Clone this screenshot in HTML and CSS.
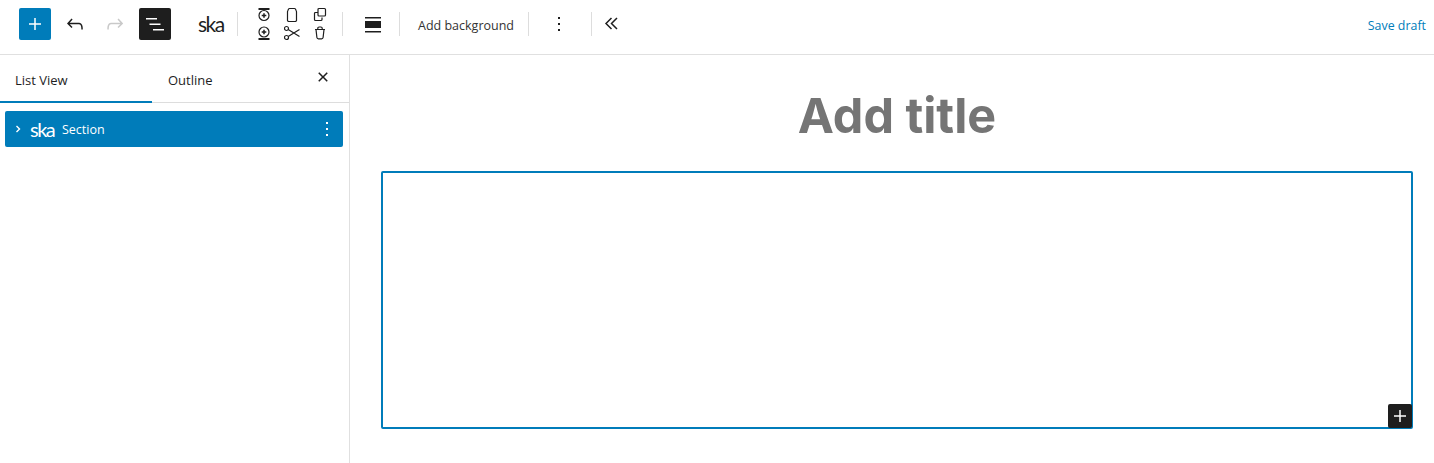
FILE: index.html
```html
<!DOCTYPE html>
<html lang="en">
<head>
    <meta charset="UTF-8">
    <title>Add title</title>
    <link rel="stylesheet" href="styles.css">
</head>
<body>
    <header class="toolbar">
        <button class="tool-btn primary">
            <svg width="24" height="24" viewBox="0 0 24 24"><path d="M11.250 12.750V18h1.500v-5.250H18v-1.500h-5.250V6h-1.500v5.250H6v1.500z"/></svg>
        </button>
        <button class="tool-btn undo">
            <svg width="24" height="24" viewBox="0 0 24 24"><path d="M18.300 11.700c-.6-.6-1.400-.9-2.300-.9H6.700l2.900-3.300-1.100-1-4.500 5L8.500 16l1-1-2.700-2.700H16c.5 0 .9.2 1.300.5 1 1 1 3.400 1 4.500v.3h1.500v-.2c0-1.500 0-4.300-1.500-5.700z"/></svg>
        </button>
        <button class="tool-btn redo">
            <svg width="24" height="24" viewBox="0 0 24 24"><path d="M15.600 6.500l-1.100 1 2.900 3.300H8c-.9 0-1.700.3-2.300.9-1.400 1.500-1.400 4.200-1.400 5.600v.2h1.500v-.3c0-1.100 0-3.500 1-4.500.3-.3.7-.5 1.300-.5h9.200L14.500 15l1.100 1.100 4.600-4.600-4.600-5z"/></svg>
        </button>
        <button class="tool-btn dark">
            <svg width="24" height="24" viewBox="0 0 24 24"><path d="M3 6h11v1.500H3zM6.500 11.500h11V13h-11zM10 17h11v1.500H10z"/></svg>
        </button>
        <span class="brand">ska</span>
        <span class="sep first-sep"></span>
        <div class="mini-grid">
            <svg class="mini" viewBox="0 0 16 16"><path class="bar" d="M2.500 2h11"/><circle cx="8" cy="8.500" r="5"/><path class="cross" d="M8 6.200v4.600M5.700 8.500h4.600"/></svg>
            <svg class="mini" viewBox="0 0 16 16"><path d="M5.500 1.500h5c.4 0 .7.2.9.6l.6 1.200c.3.500.5 1 .5 1.500V12.500A1.500 1.500 0 0 1 11 14.500H5A1.500 1.500 0 0 1 3.500 12.500V4.800c0-.5.200-1 .5-1.500l.6-1.200c.2-.4.500-.6.900-.6z"/></svg>
            <svg class="mini" viewBox="0 0 16 16"><path d="M6 2.500A1 1 0 0 1 7 1.500h5.500a1 1 0 0 1 1 1V8a1 1 0 0 1-1 1H7a1 1 0 0 1-1-1zM6 5.500H3.500a1 1 0 0 0-1 1v6a1 1 0 0 0 1 1H9a1 1 0 0 0 1-1V10.500"/></svg>
            <svg class="mini" viewBox="0 0 16 16"><path class="bar" d="M2.500 14h11"/><circle cx="8" cy="7" r="5"/><path class="cross" d="M8 4.700v4.600M5.700 7h4.600"/></svg>
            <svg class="mini" viewBox="0 0 16 16"><circle cx="2.500" cy="3.500" r="2"/><circle cx="2.500" cy="12.500" r="2"/><path d="M4.200 4.500L15.500 11.500M4.200 11.500L15.500 4.500"/></svg>
            <svg class="mini" viewBox="0 0 16 16"><path d="M3 4.500h10M5.800 4.500V3.300a1.300 1.300 0 0 1 1.300-1.300h1.800a1.300 1.300 0 0 1 1.300 1.300v1.200M4 4.500l.9 8a1.500 1.500 0 0 0 1.500 1.300h3.200a1.500 1.500 0 0 0 1.500-1.300l.9-8"/></svg>
        </div>
        <span class="sep"></span>
        <div class="align-icon">
            <svg width="16" height="16" viewBox="0 0 16 16"><path d="M0 0h16v1.500H0zM0 4h16v7H0zM0 14h16v1.500H0z"/></svg>
        </div>
        <span class="sep"></span>
        <span class="add-bg">Add background</span>
        <span class="sep"></span>
        <div class="dots">
            <svg width="24" height="24" viewBox="0 0 24 24"><path d="M13 19h-2v-2h2v2zm0-6h-2v-2h2v2zm0-6h-2V5h2v2z"/></svg>
        </div>
        <span class="sep"></span>
        <div class="collapse">
            <svg width="16" height="16" viewBox="0 0 16 16"><path class="chev" d="M7.500 2L2 7.500 7.500 13M13 2L7.500 7.500 13 13"/></svg>
        </div>
        <a class="save-draft" href="#">Save draft</a>
    </header>

    <div class="workspace">
        <aside class="sidebar">
            <div class="tabs">
                <div class="tab active">List View</div>
                <div class="tab">Outline</div>
                <div class="tab-close">
                    <svg width="24" height="24" viewBox="0 0 24 24"><path d="M12 13.060l3.712 3.713 1.061-1.060L13.061 12l3.712-3.712-1.060-1.060L12 10.938 8.288 7.227l-1.061 1.060L10.939 12l-3.712 3.712 1.060 1.061L12 13.061z"/></svg>
                </div>
            </div>
            <div class="list-row">
                <svg class="row-chevron" width="8" height="10" viewBox="0 0 8 10"><path d="M2.500 2l3 3-3 3"/></svg>
                <span class="brand brand-small">ska</span>
                <span class="row-label">Section</span>
                <svg class="row-more" width="24" height="24" viewBox="0 0 24 24"><path d="M13 19h-2v-2h2v2zm0-6h-2v-2h2v2zm0-6h-2V5h2v2z"/></svg>
            </div>
        </aside>

        <main class="canvas">
            <h1 class="post-title">Add title</h1>
            <div class="section-block">
                <button class="block-add">
                    <svg width="24" height="24" viewBox="0 0 24 24"><path d="M11.250 12.750V18h1.500v-5.250H18v-1.500h-5.250V6h-1.500v5.250H6v1.500z"/></svg>
                </button>
            </div>
        </main>
    </div>
</body>
</html>
```

FILE: styles.css
```css
* {
    margin: 0;
    padding: 0;
    box-sizing: border-box;
}

html, body {
    height: 100%;
    overflow: hidden;
}

body {
    font-family: "Open Sans", "Noto Sans", sans-serif;
    font-size: 13px;
    color: #1e1e1e;
    background: #fff;
    display: flex;
    flex-direction: column;
}

button {
    border: none;
    background: none;
    display: flex;
    align-items: center;
    justify-content: center;
}

/* Top toolbar */
.toolbar {
    height: 55px;
    flex: none;
    padding: 0 8px 6px 19px;
    border-bottom: 1px solid #e0e0e0;
    display: flex;
    align-items: center;
}

.tool-btn {
    width: 32px;
    height: 32px;
    border-radius: 2px;
    fill: #1e1e1e;
}

.tool-btn.primary {
    background: #007cba;
    fill: #fff;
}

.tool-btn.undo {
    margin-left: 8px;
}

.tool-btn.redo {
    margin-left: 8px;
    fill: #c9c9c9;
}

.tool-btn.dark {
    margin-left: 8px;
    background: #1e1e1e;
    fill: #fff;
}

.brand {
    font-family: "Lato", sans-serif;
    font-weight: 400;
    font-size: 21px;
    line-height: 24px;
    letter-spacing: -1.5px;
    color: #1e1e1e;
    margin-left: 27px;
    width: 39px;
}

.sep {
    width: 1px;
    height: 24px;
    background: #ddd;
    flex: none;
}

.mini-grid {
    display: grid;
    grid-template-columns: repeat(3, 16px);
    grid-template-rows: repeat(2, 16px);
    column-gap: 12px;
    row-gap: 2px;
    margin: 0 14px 0 18px;
}

.mini {
    width: 16px;
    height: 16px;
    fill: none;
    stroke: #1e1e1e;
    stroke-width: 1.200;
}

.mini .bar {
    stroke-width: 2;
}

.mini .cross {
    stroke-width: 1.500;
}

.align-icon {
    width: 56px;
    padding-left: 4px;
    padding-top: 2px;
    display: flex;
    justify-content: center;
    fill: #1e1e1e;
}

.align-icon svg {
    display: block;
}

.add-bg {
    width: 128px;
    padding-left: 18px;
    padding-top: 2px;
    white-space: nowrap;
    color: #333;
    font-size: 12.500px;
}

.dots {
    width: 62px;
    padding-right: 2px;
    display: flex;
    justify-content: center;
    fill: #1e1e1e;
}

.collapse {
    margin-left: 12px;
    display: flex;
}

.chev {
    fill: none;
    stroke: #1e1e1e;
    stroke-width: 1.500;
}

.save-draft {
    margin-left: auto;
    padding-top: 2px;
    color: #007cba;
    text-decoration: none;
    font-size: 12.400px;
}

/* Main area */
.workspace {
    flex: 1;
    display: flex;
    min-height: 0;
}

.sidebar {
    width: 350px;
    flex: none;
    border-right: 1px solid #e0e0e0;
}

.tabs {
    height: 48px;
    display: flex;
    align-items: center;
    border-bottom: 1px solid #ddd;
}

.tab {
    width: 152px;
    height: 48px;
    padding: 0 16px;
    line-height: 50px;
    font-size: 13px;
    color: #1e1e1e;
}

.tab.active {
    padding-left: 15px;
    border-bottom: 2px solid #007cba;
}

.tab-close {
    margin-left: auto;
    margin-right: 14px;
    margin-top: -3px;
    display: flex;
    fill: #1e1e1e;
}

.list-row {
    margin: 8px 6px 0 5px;
    height: 36px;
    border-radius: 2px;
    background: #007cba;
    color: #fff;
    display: flex;
    align-items: center;
    padding-left: 9px;
}

.row-chevron {
    fill: none;
    stroke: #fff;
    stroke-width: 1.400;
    flex: none;
}

.brand-small {
    color: #fff;
    margin-left: 8px;
    width: 32px;
    font-size: 20px;
}

.row-label {
    font-size: 12.500px;
}

.row-more {
    margin-left: auto;
    margin-right: 4px;
    fill: #fff;
}

.canvas {
    flex: 1;
    padding: 0 21px 0 31px;
    min-width: 0;
}

.post-title {
    font-family: "Inter", sans-serif;
    font-weight: 700;
    font-size: 48.500px;
    line-height: 58px;
    height: 116px;
    padding-top: 32px;
    text-align: center;
    color: #757575;
}

.section-block {
    height: 258px;
    border: 2px solid #007cba;
    border-radius: 2px;
    position: relative;
}

.block-add {
    position: absolute;
    right: -1px;
    bottom: -1px;
    width: 24px;
    height: 24px;
    border-radius: 2px;
    background: #1e1e1e;
    fill: #fff;
}
```
